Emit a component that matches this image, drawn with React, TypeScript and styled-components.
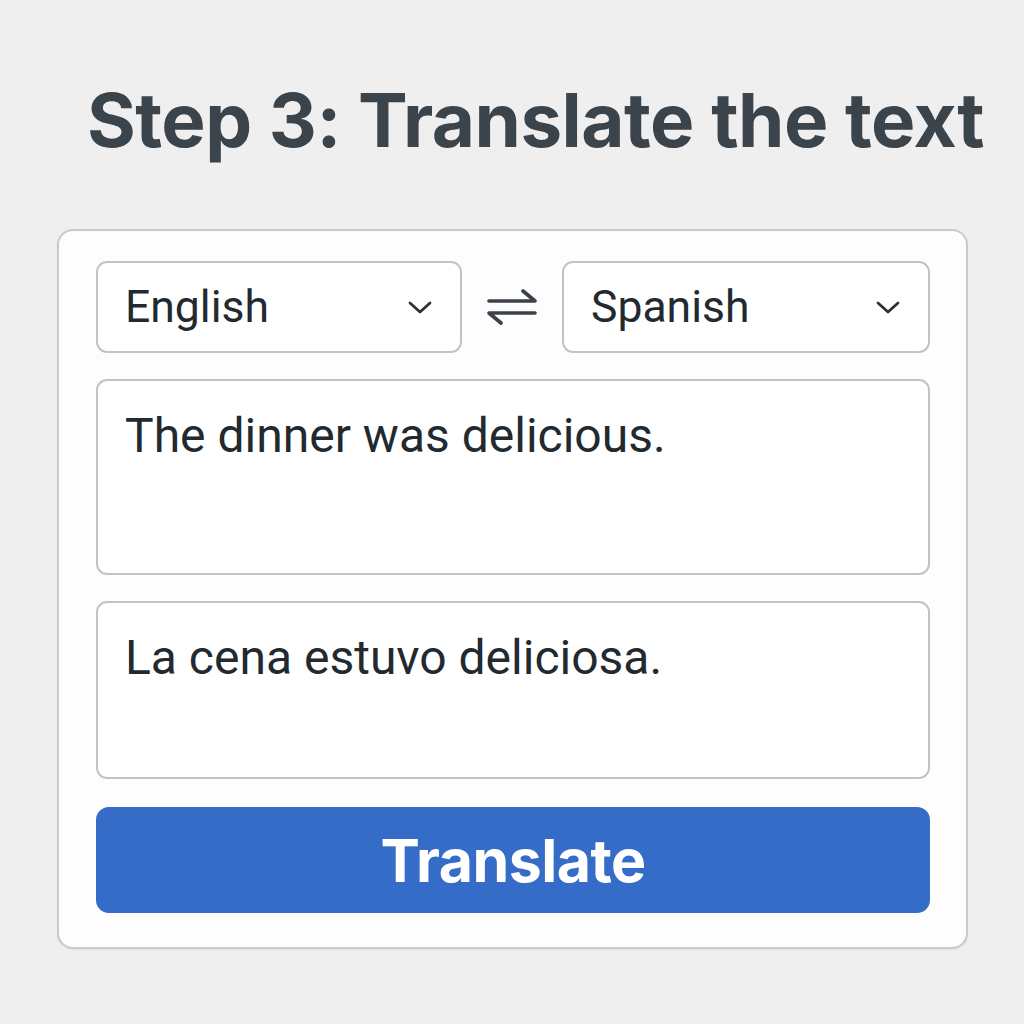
import styled, { createGlobalStyle } from 'styled-components';

const GlobalStyle = createGlobalStyle`
  html, body {
    margin: 0;
    padding: 0;
    background: #efefef;
  }
  body {
    font-family: Roboto, 'Noto Sans', sans-serif;
  }
`;

const Chevron = () => (
  <svg width="28" height="18" viewBox="0 0 28 18" fill="none">
    <path d="M4 5 L14 14 L24 5" stroke="#2b3238" strokeWidth="2.8" strokeLinecap="round" strokeLinejoin="round" />
  </svg>
);

const SwapIcon = () => (
  <svg width="54" height="40" viewBox="0 0 54 40" fill="none">
    <path d="M4 14 H50 L38 4" stroke="#3a4148" strokeWidth="3.6" strokeLinecap="round" strokeLinejoin="round" />
    <path d="M50 26 H4 L16 36" stroke="#3a4148" strokeWidth="3.6" strokeLinecap="round" strokeLinejoin="round" />
  </svg>
);

const App = () => {
  return (
    <Page>
      <GlobalStyle />
      <Title>Step 3: Translate the text</Title>
      <Card>
        <LangRow>
          <Select>
            <span>English</span>
            <Chevron />
          </Select>
          <SwapButton>
            <SwapIcon />
          </SwapButton>
          <Select>
            <span>Spanish</span>
            <Chevron />
          </Select>
        </LangRow>
        <TextBox $height={196}>The dinner was delicious.</TextBox>
        <TextBox $height={178}>La cena estuvo deliciosa.</TextBox>
        <TranslateButton>Translate</TranslateButton>
      </Card>
    </Page>
  );
};

export default App;

const Page = styled.div`
  width: 1024px;
  height: 1024px;
  box-sizing: border-box;
  padding: 70px 56px 0 57px;
  display: flex;
  flex-direction: column;
`;

const Title = styled.h1`
  margin: 0 0 0 30px;
  font-family: Inter, 'Noto Sans', sans-serif;
  font-size: 74.5px;
  font-weight: 700;
  letter-spacing: -0.5px;
  line-height: 100px;
  color: #3b434b;
  white-space: nowrap;
`;

const Card = styled.div`
  margin-top: 59px;
  width: 911px;
  height: 720px;
  box-sizing: border-box;
  padding: 30px 36px 0 37px;
  background: #fdfdfd;
  border: 2px solid #c6cacf;
  border-radius: 16px;
  box-shadow: 0 1px 2px rgba(0, 0, 0, 0.06);
  display: flex;
  flex-direction: column;
`;

const LangRow = styled.div`
  display: grid;
  grid-template-columns: 366px 1fr 368px;
  align-items: center;
  height: 92px;
`;

const Select = styled.div`
  height: 92px;
  box-sizing: border-box;
  border: 2px solid #bfc4c9;
  border-radius: 11px;
  background: #fff;
  display: flex;
  align-items: center;
  justify-content: space-between;
  padding: 0 26px 0 27px;
  font-size: 44.5px;
  color: #22292f;
`;

const SwapButton = styled.div`
  display: flex;
  align-items: center;
  justify-content: center;
`;

const TextBox = styled.div<{ $height: number }>`
  margin-top: 26px;
  height: ${(p) => p.$height}px;
  box-sizing: border-box;
  border: 2px solid #bfc4c9;
  border-radius: 11px;
  background: #fff;
  padding: 25px 27px;
  font-size: 48px;
  line-height: 60px;
  color: #22292f;
`;

const TranslateButton = styled.button`
  margin-top: 28px;
  height: 106px;
  border: none;
  border-radius: 13px;
  background: #356cc7;
  color: #fff;
  font-family: Inter, 'Noto Sans', sans-serif;
  font-size: 59px;
  font-weight: 700;
  letter-spacing: -0.5px;
  cursor: pointer;
`;
